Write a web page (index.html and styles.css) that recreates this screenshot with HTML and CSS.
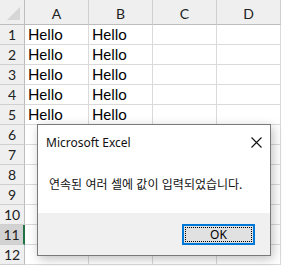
FILE: index.html
```html
<!DOCTYPE html>
<html lang="ko">
<head>
    <meta charset="UTF-8">
    <title>Microsoft Excel</title>
    <link rel="stylesheet" href="styles.css">
</head>
<body>

    <!-- Sheet grid -->
    <div class="sheet">
        <div class="corner"><span class="tri"></span></div>
        <div class="col-head">A</div>
        <div class="col-head">B</div>
        <div class="col-head">C</div>
        <div class="col-head">D</div>

        <div class="row-head">1</div><div class="cell">Hello</div><div class="cell">Hello</div><div class="cell"></div><div class="cell"></div>
        <div class="row-head">2</div><div class="cell">Hello</div><div class="cell">Hello</div><div class="cell"></div><div class="cell"></div>
        <div class="row-head">3</div><div class="cell">Hello</div><div class="cell">Hello</div><div class="cell"></div><div class="cell"></div>
        <div class="row-head">4</div><div class="cell">Hello</div><div class="cell">Hello</div><div class="cell"></div><div class="cell"></div>
        <div class="row-head">5</div><div class="cell">Hello</div><div class="cell">Hello</div><div class="cell"></div><div class="cell"></div>
        <div class="row-head">6</div><div class="cell"></div><div class="cell"></div><div class="cell"></div><div class="cell"></div>
        <div class="row-head">7</div><div class="cell"></div><div class="cell"></div><div class="cell"></div><div class="cell"></div>
        <div class="row-head">8</div><div class="cell"></div><div class="cell"></div><div class="cell"></div><div class="cell"></div>
        <div class="row-head">9</div><div class="cell"></div><div class="cell"></div><div class="cell"></div><div class="cell"></div>
        <div class="row-head">10</div><div class="cell"></div><div class="cell"></div><div class="cell"></div><div class="cell"></div>
        <div class="row-head selected">11</div><div class="cell"></div><div class="cell"></div><div class="cell"></div><div class="cell"></div>
        <div class="row-head">12</div><div class="cell"></div><div class="cell"></div><div class="cell"></div><div class="cell"></div>
    </div>

    <!-- Message box -->
    <div class="dialog">
        <div class="dialog-title">
            <span>Microsoft Excel</span>
            <svg class="close" width="11" height="11" viewBox="0 0 11 11">
                <path d="M0.5 0.5 L10.5 10.5 M10.5 0.5 L0.5 10.5" stroke="#111" stroke-width="1.1" fill="none"/>
            </svg>
        </div>
        <div class="dialog-body">연속된 여러 셀에 값이 입력되었습니다.</div>
        <div class="dialog-footer">
            <button class="ok-btn"><span>OK</span></button>
        </div>
    </div>

</body>
</html>
```

FILE: styles.css
```css
body {
    margin: 0;
    background-color: #ffffff;
    font-family: Lato, 'Noto Sans', sans-serif;
    width: 282px;
    height: 266px;
    overflow: hidden;
    position: relative;
}

/* Sheet grid */
.sheet {
    display: grid;
    grid-template-columns: 25px 64px 64px 64px 64px;
    grid-template-rows: 25px repeat(12, 20px);
}

.corner {
    background-color: #efefef;
    border-right: 1px solid #bdbdbd;
    border-bottom: 1px solid #bdbdbd;
    box-sizing: border-box;
    position: relative;
}

.tri {
    position: absolute;
    right: 4px;
    bottom: 4px;
    width: 0;
    height: 0;
    border-left: 13px solid transparent;
    border-bottom: 13px solid #d6d6d6;
}

.col-head {
    background-color: #efefef;
    border-right: 1px solid #cfcfcf;
    border-bottom: 1px solid #bdbdbd;
    box-sizing: border-box;
    display: flex;
    align-items: center;
    justify-content: center;
    font-size: 14px;
    color: #222;
    padding-top: 2px;
}

.row-head {
    background-color: #efefef;
    border-right: 1px solid #bdbdbd;
    border-bottom: 1px solid #cfcfcf;
    box-sizing: border-box;
    display: flex;
    align-items: center;
    justify-content: center;
    font-size: 14px;
    color: #222;
}

.row-head.selected {
    background-color: #d2d2d2;
    border-right: 2px solid #217346;
    color: #1f1f1f;
}

.cell {
    border-right: 1px solid #dadada;
    border-bottom: 1px solid #dadada;
    box-sizing: border-box;
    font-size: 15px;
    color: #000;
    padding-left: 3px;
    display: flex;
    align-items: flex-end;
    padding-bottom: 1px;
}

/* Message box */
.dialog {
    position: absolute;
    left: 37px;
    top: 124px;
    width: 234px;
    height: 132px;
    background-color: #ffffff;
    border: 1px solid #7a7a7a;
    box-sizing: border-box;
    box-shadow: 2px 3px 10px rgba(0, 0, 0, 0.25);
    display: flex;
    flex-direction: column;
    font-family: 'Noto Sans', 'Noto Sans CJK KR', sans-serif;
}

.dialog-title {
    height: 34px;
    display: flex;
    align-items: center;
    justify-content: space-between;
    padding: 0 8px 0 8px;
    font-size: 12px;
    color: #111;
}

.close {
    display: block;
}

.dialog-body {
    flex-grow: 1;
    padding: 16px 0 0 11px;
    font-family: 'Noto Sans CJK KR', sans-serif;
    font-size: 12px;
    color: #111;
}

.dialog-footer {
    height: 42px;
    background-color: #f0f0f0;
    display: flex;
    justify-content: flex-end;
    align-items: flex-start;
    padding: 11px 15px 0 0;
    box-sizing: border-box;
}

.ok-btn {
    width: 73px;
    height: 21px;
    background-color: #e1e1e1;
    border: 2px solid #0078d7;
    padding: 1px;
    box-sizing: border-box;
    font-family: 'Noto Sans', sans-serif;
    font-size: 12px;
    color: #000;
    display: flex;
}

.ok-btn span {
    flex-grow: 1;
    border: 1px dotted #000;
    display: flex;
    align-items: center;
    justify-content: center;
    line-height: 1;
}
```
